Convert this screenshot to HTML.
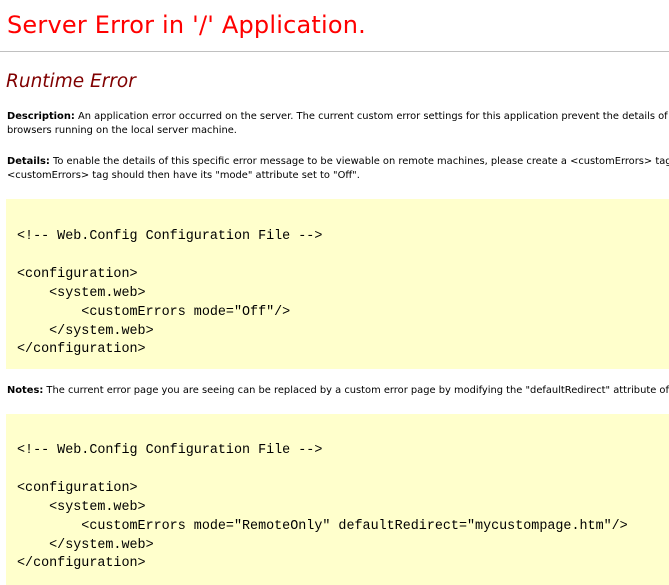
<!DOCTYPE html>
<html><head><meta charset="utf-8"><style>
html,body{margin:0;padding:0;background:#fff;width:669px;height:585px;overflow:hidden}
body{font-family:"DejaVu Sans","Liberation Sans",sans-serif;color:#000;position:relative}
.a{position:absolute;white-space:nowrap}
h1{position:absolute;left:7px;top:11px;margin:0;font-weight:normal;font-size:24px;color:#f00;white-space:nowrap;letter-spacing:0.2px}
hr{position:absolute;left:0;top:51px;width:669px;margin:0;border:0;border-top:1px solid #c0c0c0;height:0}
h2{position:absolute;left:6px;top:71px;margin:0;font-weight:normal;font-style:italic;font-size:18.5px;color:#800000;white-space:nowrap}
.t{font-size:9.9px;line-height:14px;left:7px;width:662px;overflow:hidden}
.code{position:absolute;left:6px;width:663px;background:#ffffcc;overflow:hidden}
pre{margin:0;position:absolute;left:11px;font-family:"Liberation Mono",monospace;font-size:13.4px;line-height:18.9px;color:#000}
</style></head><body>
<h1>Server Error in '/' Application.</h1>
<hr>
<h2>Runtime Error</h2>
<div class="a t" style="top:110px"><b>Description:</b> An application error occurred on the server. The current custom error settings for this application prevent the details of<br>browsers running on the local server machine.</div>
<div class="a t" style="top:155px"><b>Details:</b> To enable the details of this specific error message to be viewable on remote machines, please create a &lt;customErrors&gt; tag<br>&lt;customErrors&gt; tag should then have its "mode" attribute set to "Off".</div>
<div class="code" style="top:199px;height:170px"><pre style="top:29px">&lt;!-- Web.Config Configuration File --&gt;

&lt;configuration&gt;
    &lt;system.web&gt;
        &lt;customErrors mode="Off"/&gt;
    &lt;/system.web&gt;
&lt;/configuration&gt;</pre></div>
<div class="a t" style="top:384px"><b>Notes:</b> The current error page you are seeing can be replaced by a custom error page by modifying the "defaultRedirect" attribute of</div>
<div class="code" style="top:414px;height:171px"><pre style="top:28px">&lt;!-- Web.Config Configuration File --&gt;

&lt;configuration&gt;
    &lt;system.web&gt;
        &lt;customErrors mode="RemoteOnly" defaultRedirect="mycustompage.htm"/&gt;
    &lt;/system.web&gt;
&lt;/configuration&gt;</pre></div>
</body></html>
